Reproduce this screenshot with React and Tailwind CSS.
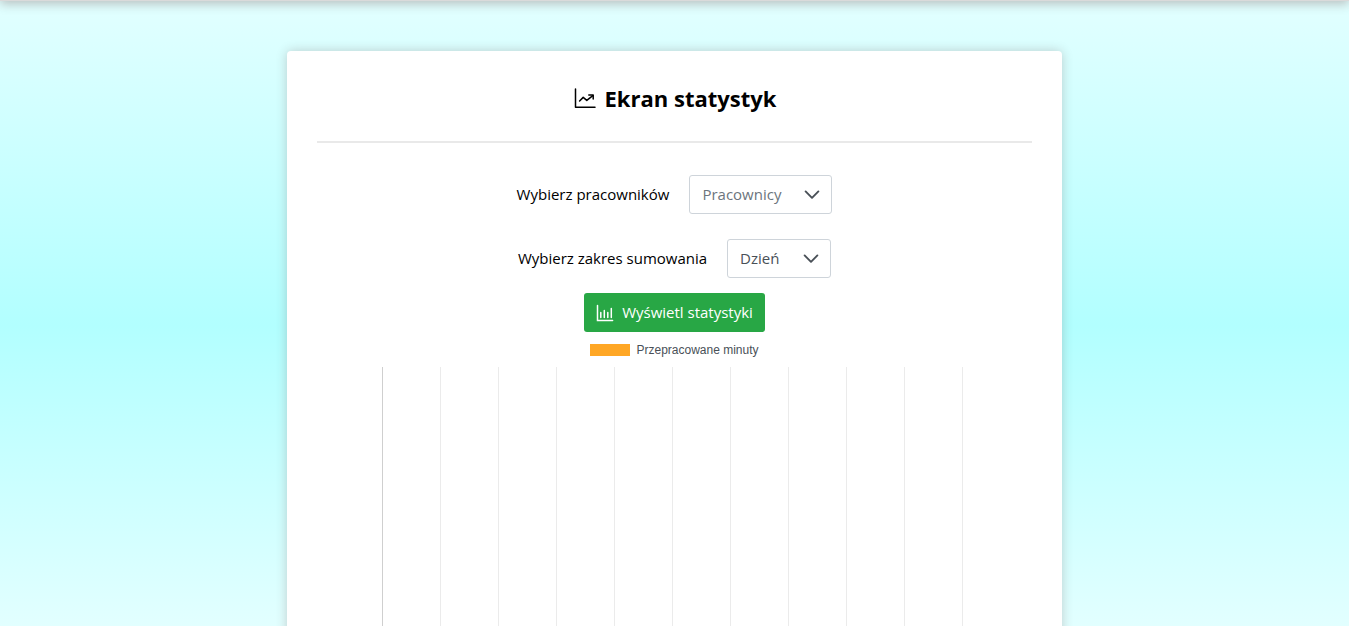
import { useState } from 'react';

const GRID_LINES = 11;

function TrendIcon() {
  return (
    <svg viewBox="0 0 24 24" className="size-6" fill="none" stroke="currentColor" strokeWidth="1.5" strokeLinecap="round" strokeLinejoin="round" aria-hidden="true">
      <path d="M2.5 3V21.3H22" />
      <path d="M6.6 15L10.2 11.4L13.8 14.4L19.8 9.7" />
      <path d="M15.8 8.9H20.2V13.1" />
    </svg>
  );
}

function BarsIcon() {
  return (
    <svg viewBox="0 0 18 18" className="size-[18px]" fill="none" stroke="currentColor" strokeWidth="1.5" strokeLinecap="round" aria-hidden="true">
      <path d="M1.5 1.5V16.4H16.6" />
      <path d="M4.8 8.5V13.6M8.3 6.5V13.6M11.8 8.5V13.6M15.3 4.5V13.6" />
    </svg>
  );
}

function Chevron() {
  return (
    <svg viewBox="0 0 16 16" className="pointer-events-none col-start-1 row-start-1 mr-3 size-4 self-center justify-self-end text-[#495057]" fill="none" stroke="currentColor" strokeWidth="1.9" strokeLinecap="round" strokeLinejoin="round" aria-hidden="true">
      <path d="M1.6 4.4L8 10.8L14.4 4.4" />
    </svg>
  );
}

function SelectField({ id, label, options, className }) {
  const [value, setValue] = useState(options[0]);
  return (
    <div className="flex items-center justify-center gap-5">
      <label htmlFor={id}>{label}</label>
      <div className="grid">
        <select
          id={id}
          value={value}
          onChange={(e) => setValue(e.target.value)}
          className={`col-start-1 row-start-1 h-[39px] appearance-none rounded-[3px] border border-[#ced4da] bg-white px-3 ${className}`}
        >
          {options.map((o) => (
            <option key={o}>{o}</option>
          ))}
        </select>
        <Chevron />
      </div>
    </div>
  );
}

function Chart() {
  return (
    <figure>
      <figcaption className="flex h-[35px] items-center justify-center gap-1.5 font-['Liberation_Sans',Arial,sans-serif] text-xs text-[#495057]">
        <span className="h-3 w-10 bg-[#ffa726]" />
        Przepracowane minuty
      </figcaption>
      <div className="ml-[65px] mr-[69px] flex h-[360px] justify-between">
        {Array.from({ length: GRID_LINES }, (_, i) => (
          <span key={i} className={i === 0 ? 'w-px bg-[#cfcfcf]' : 'w-px bg-[#ebebeb]'} />
        ))}
      </div>
    </figure>
  );
}

export default function App() {
  return (
    <div className="h-screen overflow-hidden bg-[linear-gradient(180deg,#e2ffff_0%,#b2ffff_52%,#e2ffff_100%)] font-['Open_Sans','Noto_Sans',sans-serif] text-[15px] text-black">
      <header className="-mt-[39px] h-10 bg-[#dadada] shadow-[0_3px_10px_rgba(60,0,0,0.25)]" />
      <main className="mx-auto mt-[50px] w-[775px] max-w-full rounded-[4px] bg-white px-[30px] pt-[29px] shadow-[0_0_12px_rgba(60,0,0,0.2)]">
        <h1 className="flex h-9 items-center justify-center gap-2 text-[22px] font-bold">
          <TrendIcon />
          Ekran statystyk
        </h1>
        <hr className="mt-[25px] mb-8 border-t-2 border-[#e9e9e9]" />
        <form className="flex flex-col" onSubmit={(e) => e.preventDefault()}>
          <div className="flex flex-col gap-[25px]">
            <SelectField id="workers" label="Wybierz pracowników" options={['Pracownicy']} className="w-[143px] text-[#6c757d]" />
            <SelectField id="range" label="Wybierz zakres sumowania" options={['Dzień', 'Tydzień', 'Miesiąc']} className="w-[104px] text-[#495057]" />
          </div>
          <button type="submit" className="mt-[15px] flex h-[39px] items-center gap-2 self-center rounded-[3px] bg-[#28a745] px-3 text-white">
            <BarsIcon />
            Wyświetl statystyki
          </button>
        </form>
        <Chart />
      </main>
    </div>
  );
}
